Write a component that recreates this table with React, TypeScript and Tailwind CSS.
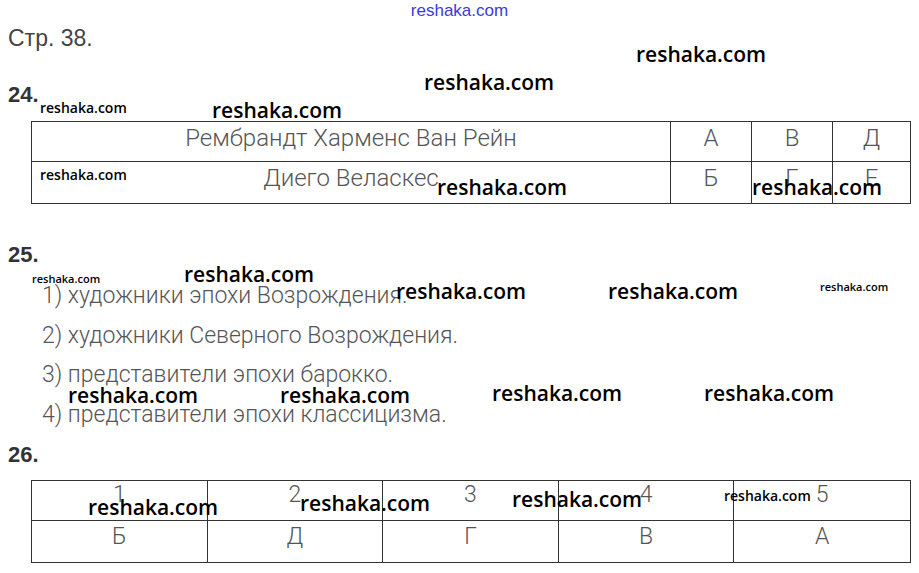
import React from "react";

const marks = [
  { cls: "left-[636px] top-[44px] text-[21px]" },
  { cls: "left-[424px] top-[72px] text-[21px]" },
  { cls: "left-[40px] top-[101px] text-[14px]" },
  { cls: "left-[212px] top-[100px] text-[21px]" },
  { cls: "left-[40px] top-[168px] text-[14px]" },
  { cls: "left-[437px] top-[177px] text-[21px]" },
  { cls: "left-[752px] top-[177px] text-[21px]" },
  { cls: "left-[32px] top-[273px] text-[11px]" },
  { cls: "left-[184px] top-[264px] text-[21px]" },
  { cls: "left-[396px] top-[281px] text-[21px]" },
  { cls: "left-[608px] top-[281px] text-[21px]" },
  { cls: "left-[820px] top-[281px] text-[11px]" },
  { cls: "left-[68px] top-[385px] text-[21px]" },
  { cls: "left-[280px] top-[385px] text-[21px]" },
  { cls: "left-[492px] top-[383px] text-[21px]" },
  { cls: "left-[704px] top-[383px] text-[21px]" },
  { cls: "left-[88px] top-[497px] text-[21px]" },
  { cls: "left-[300px] top-[493px] text-[21px]" },
  { cls: "left-[512px] top-[489px] text-[21px]" },
  { cls: "left-[724px] top-[489px] text-[14px]" },
];

const answers25 = [
  "1) художники эпохи Возрождения.",
  "2) художники Северного Возрождения.",
  "3) представители эпохи барокко.",
  "4) представители эпохи классицизма.",
];

export default function App() {
  return (
    <div className="relative w-[919px] h-[573px] overflow-hidden bg-white text-[#555] font-['Roboto',sans-serif]">
      <div className="h-[24px] pt-[1px] text-center text-[17px] leading-[20px] text-[#3a3ae0] font-['Liberation_Sans',sans-serif]">
        reshaka.com
      </div>

      <div className="pl-2 mt-0 text-[23px] leading-[28px] text-[#444] font-['Liberation_Sans',sans-serif]">Стр. 38.</div>

      <div className="pl-2 mt-[31px] text-[22px] leading-[24px] font-bold text-[#333] font-['Liberation_Sans',sans-serif]">24.</div>

      <div className="ml-[31px] mt-[14px] w-[880px] border border-[#333] grid grid-cols-[639px_81px_81px_1fr] text-[24px] font-light leading-[28px]">
        <div className="h-[40px] pt-[2px] text-center border-r border-b border-[#333]">Рембрандт Харменс Ван Рейн</div>
        <div className="h-[40px] pt-[2px] text-center border-r border-b border-[#333]">А</div>
        <div className="h-[40px] pt-[2px] text-center border-r border-b border-[#333]">В</div>
        <div className="h-[40px] pt-[2px] text-center border-b border-[#333]">Д</div>
        <div className="h-[41px] pt-[2px] text-center border-r border-[#333]">Диего Веласкес</div>
        <div className="h-[41px] pt-[2px] text-center border-r border-[#333]">Б</div>
        <div className="h-[41px] pt-[2px] text-center border-r border-[#333]">Г</div>
        <div className="h-[41px] pt-[2px] text-center">Е</div>
      </div>

      <div className="pl-2 mt-[39px] text-[22px] leading-[24px] font-bold text-[#333] font-['Liberation_Sans',sans-serif]">25.</div>

      <div className="pl-[42px] mt-[17px] flex flex-col gap-[15.5px] text-[23px] font-light leading-[24px]">
        {answers25.map((a) => (
          <div key={a}>{a}</div>
        ))}
      </div>

      <div className="pl-2 mt-[16px] text-[22px] leading-[24px] font-bold text-[#333] font-['Liberation_Sans',sans-serif]">26.</div>

      <div className="ml-[31px] mt-[13px] w-[880px] border border-[#333] grid grid-cols-5 text-[23px] font-light leading-[26px]">
        {["1", "2", "3", "4", "5"].map((n, i) => (
          <div key={n} className={i < 4 ? "h-[40px] pt-[1px] text-center border-r border-b border-[#333]" : "h-[40px] pt-[1px] text-center border-b border-[#333]"}>
            {n}
          </div>
        ))}
        {["Б", "Д", "Г", "В", "А"].map((n, i) => (
          <div key={n} className={i < 4 ? "h-[41px] pt-[3px] text-center border-r border-[#333]" : "h-[41px] pt-[3px] text-center"}>
            {n}
          </div>
        ))}
      </div>

      {marks.map((m, i) => (
        <div key={i} className={"absolute leading-none font-semibold text-black font-['Open_Sans',sans-serif] " + m.cls}>
          reshaka.com
        </div>
      ))}
    </div>
  );
}
